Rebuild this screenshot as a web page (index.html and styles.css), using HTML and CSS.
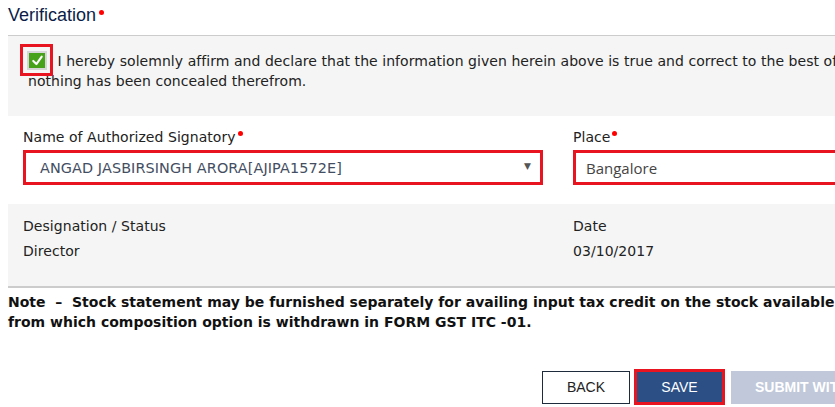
FILE: index.html
```html
<!DOCTYPE html>
<html>
<head>
<meta charset="utf-8">
<link rel="stylesheet" href="styles.css">
</head>
<body>
<div class="page">
  <h4 class="heading">Verification<span class="req"></span></h4>
  <div class="declare">
    <p class="declare-text"><span class="chk-hl"><span class="chk"><svg viewBox="0 0 16 16" width="16" height="16"><path d="M3.5 8.5 L6.8 11.8 L12.5 3.8" fill="none" stroke="#fff" stroke-width="2.2" stroke-linecap="round" stroke-linejoin="round"/></svg></span></span> I hereby solemnly affirm and declare that the information given herein above is true and correct to the best of my knowledge and belief and<br>nothing has been concealed therefrom.</p>
  </div>
  <div class="row fields">
    <div class="col">
      <label class="lbl">Name of Authorized Signatory<span class="req"></span></label>
      <div class="select hl">ANGAD JASBIRSINGH ARORA[AJIPA1572E]<span class="caret">▼</span></div>
    </div>
    <div class="col">
      <label class="lbl">Place<span class="req"></span></label>
      <div class="input hl">Bangalore</div>
    </div>
  </div>
  <div class="row info">
    <div class="col">
      <div class="lbl2">Designation / Status</div>
      <div class="val">Director</div>
    </div>
    <div class="col">
      <div class="lbl2">Date</div>
      <div class="val">03/10/2017</div>
    </div>
  </div>
  <p class="note">Note &nbsp;–&nbsp; Stock statement may be furnished separately for availing input tax credit on the stock available on the date<br>from which composition option is withdrawn in FORM GST ITC -01.</p>
  <div class="actions">
    <button class="btn btn-back">BACK</button>
    <span class="save-hl"><button class="btn btn-save">SAVE</button></span>
    <button class="btn btn-submit">SUBMIT WITH DSC</button>
  </div>
</div>
</body>
</html>
```
FILE: styles.css
```css
html, body {
  margin: 0;
  padding: 0;
  background: #fff;
  overflow: hidden;
}
body {
  font-family: "DejaVu Sans", Verdana, sans-serif;
  font-size: 14px;
  letter-spacing: 0.05px;
  color: #333;
}
.page {
  width: 1100px;
  padding-left: 8px;
}
.heading {
  margin: 0;
  padding: 5px 0 10px;
  font-family: "Liberation Sans", Arial, sans-serif;
  font-weight: normal;
  font-size: 18px;
  letter-spacing: 0;
  line-height: 20px;
  color: #0b1c48;
  border-bottom: 1px solid #ccc;
}
.req {
  display: inline-block;
  width: 5px;
  height: 5px;
  border-radius: 50%;
  background: #f00;
  vertical-align: top;
  margin: 5px 0 0 3px;
}
.lbl .req { margin-top: 4px; margin-left: 2px; }
.declare {
  background: #f5f5f5;
  padding: 15px 20px 25px;
}
.declare-text {
  margin: 0;
  line-height: 20px;
  color: #222;
  white-space: nowrap;
}
.chk-hl {
  display: inline-block;
  vertical-align: middle;
  width: 27px;
  height: 26px;
  border: 3px solid #e8141f;
  margin: -8px 0 -7px -8px;
  position: relative;
  top: -2px;
  box-sizing: content-box;
}
.chk {
  position: absolute;
  left: 4px;
  top: 4px;
  width: 16px;
  height: 15px;
  background: #47a21a;
  border: 2px solid #d6d6d6;
  display: flex;
  align-items: center;
  justify-content: center;
}
.chk svg { width: 15px; height: 15px; }
.row {
  display: flex;
}
.col {
  width: 550px;
  padding: 0 15px;
  box-sizing: border-box;
}
.fields {
  padding: 11px 0 19px;
}
.lbl {
  display: block;
  line-height: 20px;
  height: 20px;
  margin-bottom: 3px;
  color: #222;
}
.hl {
  border: 3px solid #e8141f;
  height: 29px;
  box-sizing: content-box;
  display: flex;
  align-items: center;
  position: relative;
}
.select {
  padding: 0 14px;
  font-size: 14.4px;
  letter-spacing: 0.1px;
  color: #434e62;
}
.caret {
  position: absolute;
  right: 9px;
  top: 8px;
  font-size: 9px;
  color: #555;
}
.input {
  padding: 0 10px;
  font-family: "Open Sans", sans-serif;
  font-size: 15px;
  letter-spacing: 0;
  color: #444;
}
.info {
  background: #f5f5f5;
  padding: 10px 0 22px;
  border-bottom: 2px solid #ccc;
}
.lbl2, .val {
  line-height: 25px;
  color: #222;
}
.note {
  margin: 4px 0 0;
  font-weight: bold;
  line-height: 20px;
  letter-spacing: 0;
  color: #111;
  white-space: nowrap;
}
.actions {
  display: flex;
  align-items: center;
  padding: 37px 0 0 534px;
}
.btn {
  font-family: "Liberation Sans", Arial, sans-serif;
  font-size: 14px;
  letter-spacing: 0;
  height: 33px;
  padding: 0;
  box-sizing: border-box;
  cursor: pointer;
}
.btn-back {
  width: 88px;
  background: #fff;
  color: #222;
  border: 1px solid #1e2b3c;
}
.save-hl {
  display: inline-block;
  border: 3px solid #e8141f;
  margin-left: 4px;
  line-height: 0;
}
.btn-save {
  width: 85px;
  height: 30px;
  background: #2c4f85;
  color: #fff;
  border: 0;
}
.btn-submit {
  margin-left: 6px;
  padding: 0 24px;
  background: #c0c8da;
  color: #fff;
  border: 0;
  font-weight: bold;
  font-size: 14px;
  white-space: nowrap;
}
```
